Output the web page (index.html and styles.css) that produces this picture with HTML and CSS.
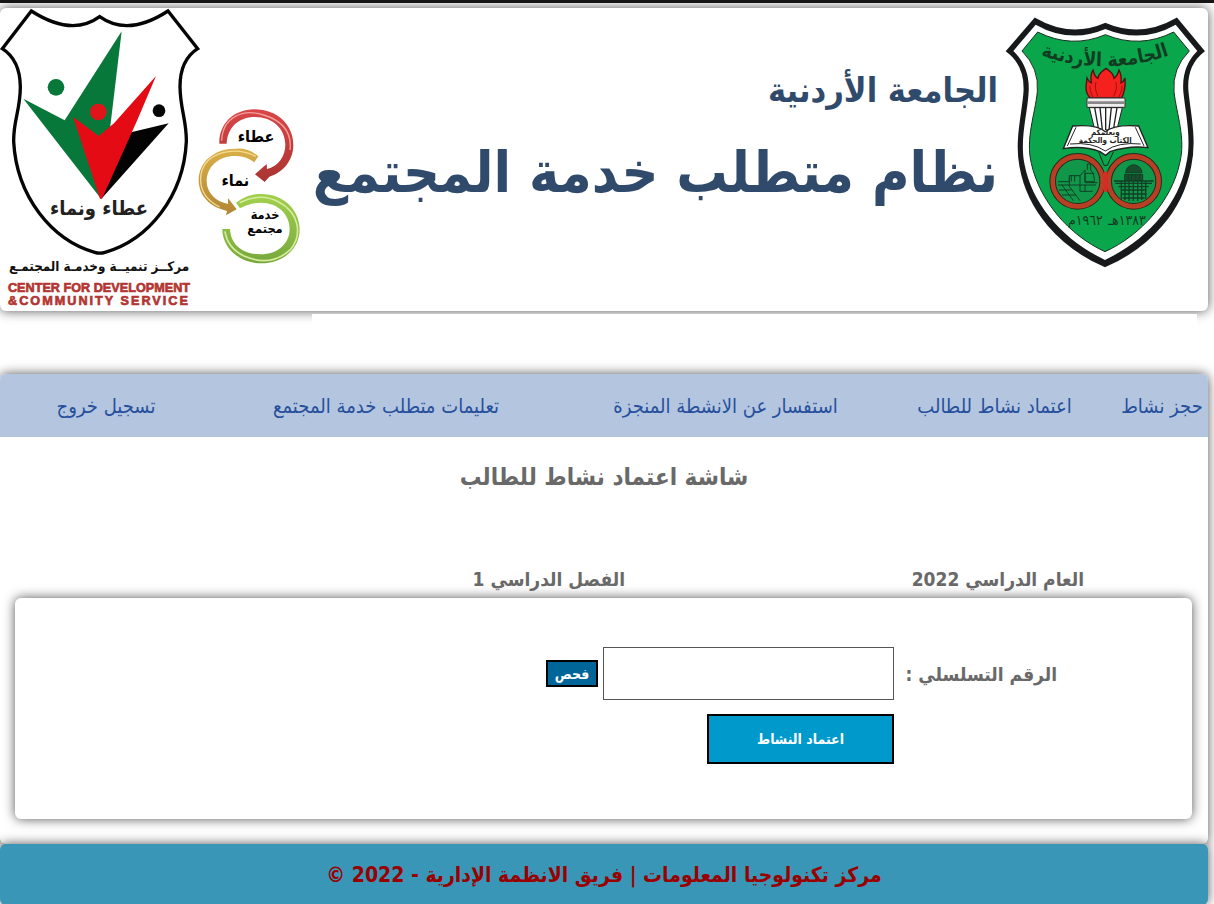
FILE: index.html
```html
<!DOCTYPE html>
<html lang="ar" dir="rtl">
<head>
<meta charset="utf-8">
<title>نظام متطلب خدمة المجتمع</title>
<link rel="stylesheet" href="styles.css">
</head>
<body>
<div class="page">
  <header class="banner">
    <svg class="emblem" viewBox="45 48 600 756" role="img" aria-label="الجامعة الأردنية">
      <path d="M135 57Q240 118 346 72Q455 118 560 57L640 153Q585 195 592 275C598 340 618 420 600 500C575 630 480 740 345 798C210 740 115 630 92 500C76 420 100 340 104 275Q108 195 52 153Z" fill="#17191b" stroke="#17191b" stroke-width="7"/>
      <path d="M137 74Q240 132 346 87Q455 132 557 74L622 153Q574 200 580 275C587 345 606 420 588 495C565 615 470 720 345 780C220 720 127 615 104 495C88 420 112 345 116 275Q120 200 70 153Z" fill="#fff"/>
      <path d="M143 96Q245 147 346 104Q450 147 551 96L598 153Q546 205 552 275C560 345 588 415 569 490C545 600 455 705 345 755C235 705 148 600 124 490C106 415 135 345 142 275Q148 205 96 153Z" fill="#0aa64c" stroke="#16301f" stroke-width="3"/>
      <defs><path id="arc" d="M130 158Q345 240 560 158"/></defs>
      <text class="emblem-name" direction="ltr"><textPath href="#arc" startOffset="50%">الجامعة الأردنية</textPath></text>
      <path d="M300 294C282 275 289 255 291 234Q297 246 304 249Q300 225 309 210Q314 231 324 235Q324 221 348 205Q372 221 372 235Q382 228 387 210Q396 227 393 249Q401 245 405 234Q408 268 395 294Z" fill="#f5211e" stroke="#481313" stroke-width="4"/>
      <path d="M309 292Q298 270 300 257M324 290Q312 264 318 246M370 290Q384 264 377 246M386 292Q398 270 396 257" fill="none" stroke="#97150f" stroke-width="3"/>
      <path d="M291 294H405V322H291Z" fill="#eee" stroke="#333" stroke-width="3"/>
      <path d="M292 308H404" stroke="#888" stroke-width="8"/>
      <path d="M298 323H397L378 400H317Z" fill="#fff" stroke="#222" stroke-width="3"/>
      <path d="M314 323L326 390M330 323L337 390M347 323V390M364 323L357 390M381 323L370 390" stroke="#222" stroke-width="4"/>
      <path d="M248 378Q320 372 346 395Q375 372 446 378L474 443Q420 436 360 455L347 466L330 455Q280 436 220 446Z" fill="#fff" stroke="#222" stroke-width="4"/>
      <path d="M240 432Q305 425 346 453Q385 425 452 432M258 382L232 438M436 382L462 438M326 456L342 496H352L370 456" fill="none" stroke="#222" stroke-width="3"/>
      <text class="motto" x="346" y="404">ويعلمكم</text>
      <text class="motto" x="346" y="428">الكتاب والحكمة</text>
      <circle cx="263" cy="544" r="75" fill="#109749" stroke="#272a20" stroke-width="20"/>
      <circle cx="431" cy="544" r="75" fill="#109749" stroke="#272a20" stroke-width="20"/>
      <g fill="none" stroke="#b83f23" stroke-width="14"><circle cx="263" cy="544" r="75"/><circle cx="431" cy="544" r="75"/></g>
      <path d="M347 515V575" stroke="#d62b26" stroke-width="12"/>
      <g fill="none" stroke="#113f25" stroke-width="3">
        <path d="M204 545H238V527H270L285 510V548H322M204 555H235L270 602M216 555L250 602M235 555H318M207 570H244M216 585H258M238 535V555M270 527V574H308M285 555V575M292 510V492H302V510Q314 523 313 545H285V520H313M244 527V545M254 527V545"/>
        <path d="M372 543H491M376 550H486M386 560H476M392 570H470M392 582H470M398 594H464M394 543V598M405 543V600M417 543V603M430 543V603M443 543V603M455 543V600M467 543V598" stroke-width="4"/>
        <path d="M407 518Q408 498 431 494Q455 498 456 518ZM404 523H458V541H404ZM415 523V541M425 523V541M437 523V541M448 523V541" fill="#184d2d"/>
      </g>
      <text class="emblem-year" x="286" y="674">١٩٦٢م</text>
      <text class="emblem-year" x="411" y="674">١٣٨٣هـ</text>
    </svg>
    <div class="titles">
      <p class="university">الجامعة الأردنية</p>
      <h1 class="system">نظام متطلب خدمة المجتمع</h1>
    </div>
    <svg class="cycle" viewBox="600 320 306 474" role="img" aria-label="عطاء نماء خدمة مجتمع">
      <defs>
        <linearGradient id="red" x2="0" y2="1"><stop stop-color="#da4648"/><stop offset="1" stop-color="#a93431"/></linearGradient>
        <linearGradient id="gold" x2="0" y2="1"><stop stop-color="#d9af49"/><stop offset="1" stop-color="#b28635"/></linearGradient>
        <linearGradient id="lime" x2="0" y2="1"><stop stop-color="#a2d04d"/><stop offset="1" stop-color="#78a83c"/></linearGradient>
      </defs>
      <path d="M658 430C657 370 700 328 763 327C830 327 880 372 880 434C880 480 850 516 808 529L794 545L765 522L800 491L801 506C835 498 856 468 856 433C855 384 818 350 765 350C715 350 682 382 680 430Z" fill="url(#red)"/>
      <path d="M665 421C668 350 729 324 791 344Q879 371 870 449" fill="none" stroke="#f3a09b" stroke-width="4"/>
      <path d="M775 468Q746 443 710 445C645 443 596 483 596 540C597 588 630 620 681 632L678 645L710 627L684 593L684 611C649 604 620 579 620 542C621 496 659 465 710 467Q740 468 763 486Z" fill="url(#gold)"/>
      <path d="M767 468C710 435 616 454 603 522Q594 588 659 620" fill="none" stroke="#f5dc91" stroke-width="4"/>
      <path d="M708 607C735 587 759 580 784 581C851 581 898 628 899 687C899 747 848 789 783 789C718 788 667 743 667 686H690C692 733 728 762 782 762C833 762 868 731 869 687C869 641 833 607 783 607Q748 608 720 624Z" fill="url(#lime)"/>
      <path d="M719 607Q781 576 835 604C897 636 909 702 871 748Q813 802 732 767Q682 742 675 693" fill="none" stroke="#d7ec9e" stroke-width="5"/>
      <text class="cycle-word" x="768" y="426">عطاء</text>
      <text class="cycle-word" x="706" y="556">نماء</text>
      <text class="cycle-small" x="795" y="655">خدمة</text>
      <text class="cycle-small" x="795" y="699">مجتمع</text>
    </svg>
    <svg class="center-logo" viewBox="0 24 600 909" role="img" aria-label="مركز تنمية وخدمة المجتمع">
      <path d="M94 33Q216 111 299 50Q384 111 504 33L593 146Q540 180 540 260C541 330 560 360 559 425C551 590 445 720 315 757Q299 762 284 757C155 720 50 590 41 425C40 360 61 330 61 260Q60 180 7 146Z" fill="#fff" stroke="#050505" stroke-width="10"/>
      <path d="M70 296L194 361L365 94L332 370L303 596Z" fill="#08783a"/>
      <path d="M393 397L506 370L303 598Z" fill="#030303"/>
      <path d="M219 350L296 408L342 370L468 228L412 360L306 596H300Z" fill="#e50b14"/>
      <circle cx="168" cy="262" r="25" fill="#08783a"/><circle cx="295" cy="336" r="25" fill="#df1519"/><circle cx="477" cy="332" r="19" fill="#050505"/>
      <text class="logo-slogan" x="297" y="646">عطاء ونماء</text>
      <text class="logo-arabic" x="297" y="812">مركــز تنميــة وخدمـة المجتمـع</text>
      <text class="logo-latin" x="297" y="875">CENTER FOR DEVELOPMENT</text>
      <text class="logo-latin logo-spaced" x="297" y="916">&amp;COMMUNITY SERVICE</text>
    </svg>
  </header>
  <div class="spacer"></div>
  <main class="content">
    <nav class="menu" aria-label="القائمة الرئيسية">
      <a href="#">حجز نشاط</a>
      <a href="#">اعتماد نشاط للطالب</a>
      <a href="#">استفسار عن الانشطة المنجزة</a>
      <a href="#">تعليمات متطلب خدمة المجتمع</a>
      <a href="#">تسجيل خروج</a>
    </nav>
    <h2 class="screen-title">شاشة اعتماد نشاط للطالب</h2>
    <div class="term">
      <span>العام الدراسي 2022</span>
      <span>الفصل الدراسي 1</span>
    </div>
    <form class="card">
      <label for="serial">الرقم التسلسلي :</label>
      <div class="field">
        <input id="serial" class="serial" type="text">
        <button class="check" type="button">فحص</button>
      </div>
      <button class="approve" type="button">اعتماد النشاط</button>
    </form>
  </main>
  <footer class="footer">مركز تكنولوجيا المعلومات | فريق الانظمة الإدارية - 2022 ©</footer>
</div>
</body>
</html>
```
FILE: styles.css
```css
* { box-sizing: border-box; }
body {
  margin: 0;
  border-top: 3px solid #151515;
  background: #fff;
  color: #696969;
  font-family: "DejaVu Sans Condensed", "DejaVu Sans", sans-serif;
  overflow-x: hidden;
}
.page { margin: 5px 6px 0 0; }
.banner {
  display: flex;
  align-items: flex-start;
  padding-right: 3px;
  background: #fff;
  border-radius: 6px;
  box-shadow: 0 0 12px #555;
}
.banner svg { flex: none; }
.banner text { text-anchor: middle; font-family: "DejaVu Sans Condensed", "DejaVu Sans", sans-serif; font-weight: bold; }
.emblem { width: 200px; height: 252px; margin-top: 8px; }
.emblem-name { font-size: 58px; fill: #113c22; }
.emblem .motto { font-size: 24px; fill: #222; }
.emblem .emblem-year { font-size: 42px; font-weight: normal; fill: #113c22; }
.titles {
  flex: 1;
  min-width: 0;
  padding: 56px 7px 0 0;
  color: #2f4a6b;
  font-weight: bold;
  white-space: nowrap;
}
.university { margin: 0; font-size: 34px; line-height: 52px; }
.system { margin: 16px 0 0; font-size: 57px; line-height: 80px; }
.cycle { width: 102px; height: 158px; margin-top: 99px; overflow: visible; }
.cycle-word { font-size: 48px; }
.cycle-small { font-size: 38px; }
.center-logo { width: 200px; height: 303px; }
.logo-slogan { font-size: 60px; fill: #222; }
.logo-arabic { font-size: 40px; fill: #111; }
.banner .logo-latin {
  font-family: "Liberation Sans", sans-serif;
  font-size: 38px;
  fill: #b33531;
  stroke: #b33531;
  stroke-width: 2px;
  direction: ltr;
}
.banner .logo-spaced { letter-spacing: 6px; }
.spacer {
  position: relative;
  height: 60px;
  margin: 3px 11px 0 312px;
  background: #fff;
}
.content {
  position: relative;
  padding-bottom: 25px;
  background: #fff;
  border-radius: 6px;
  box-shadow: 0 0 12px #555;
}
.menu {
  display: grid;
  grid-template-columns: 92fr 243fr 295fr 384fr 176fr;
  align-items: center;
  height: 63px;
  padding-left: 18px;
  background: #b3c5df;
  border-radius: 6px 6px 0 0;
}
.menu a { color: #264f9c; font-size: 20px; text-align: center; text-decoration: none; white-space: nowrap; }
.screen-title { margin: 24px 0 0; font-size: 24px; line-height: 32px; text-align: center; }
.term {
  display: grid;
  grid-template-columns: 459fr 625fr;
  margin-top: 72px;
  padding-right: 124px;
  font-size: 19px;
  font-weight: bold;
  line-height: 28px;
}
.card {
  display: grid;
  grid-template-columns: 158px 1fr;
  align-items: center;
  gap: 14px 5px;
  margin: 5px 16px 0 15px;
  padding: 49px 135px 55px 0;
  background: #fff;
  border-radius: 6px;
  box-shadow: 0 0 12px #555;
}
.card label { font-size: 19px; font-weight: bold; white-space: nowrap; }
.field { display: flex; align-items: center; gap: 5px; }
.serial { width: 291px; height: 53px; padding: 4px 8px; border: 1px solid #555; font-size: 19px; }
.check, .approve { border: 2px solid #000; color: #fff; font-family: inherit; font-weight: bold; }
.check { width: 52px; height: 27px; padding: 0; background: #069; font-size: 14px; }
.approve { grid-column: 2; width: 187px; height: 50px; background: #09c; font-size: 14px; }
.footer {
  position: relative;
  padding: 15px 0 14px;
  background: #3996b7;
  border-radius: 6px;
  box-shadow: 0 0 12px #555;
  color: #900;
  font-size: 21px;
  font-weight: bold;
  line-height: 32px;
  text-align: center;
}
```
